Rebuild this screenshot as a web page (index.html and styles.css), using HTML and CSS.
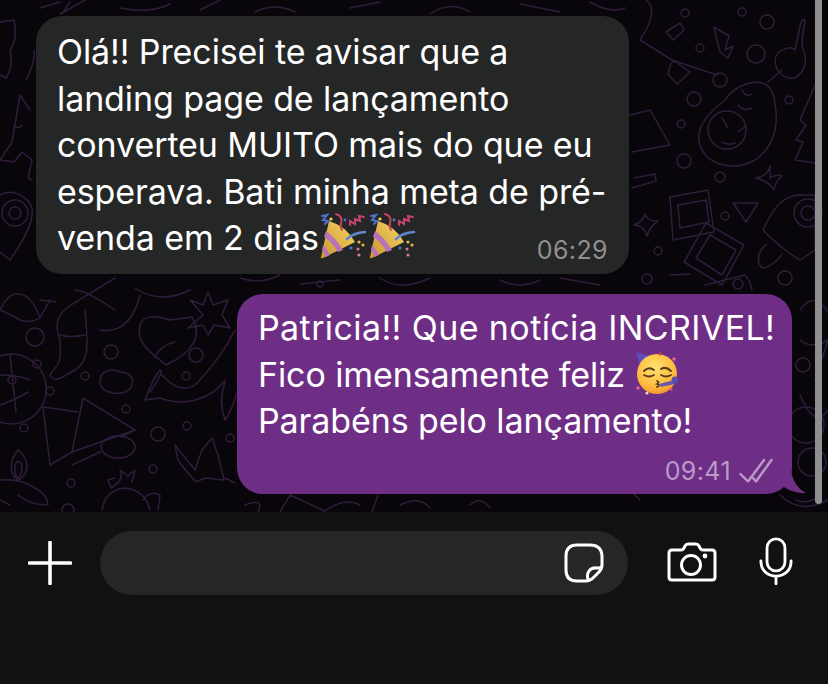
FILE: index.html
```html
<!DOCTYPE html>
<html lang="pt-BR">

<head>
  <meta charset="UTF-8">
  <meta name="viewport" content="width=device-width, initial-scale=1.0">
  <title>Conversa</title>
  <link rel="stylesheet" href="styles.css">
</head>

<body>
  <!-- emoji drawings, used in the text below -->
  <svg class="defs" width="0" height="0">
    <defs>
      <linearGradient id="cone" x1="0" y1="1" x2="1" y2="0">
        <stop offset="0" stop-color="#c9952f" />
        <stop offset="1" stop-color="#f8d766" />
      </linearGradient>
      <radialGradient id="face" cx="0.45" cy="0.35" r="0.7">
        <stop offset="0" stop-color="#ffe36e" />
        <stop offset="0.7" stop-color="#fdb93c" />
        <stop offset="1" stop-color="#ef8f2a" />
      </radialGradient>
      <symbol id="popper" viewBox="0 0 48 48">
        <path d="M2 45 Q1 47 4 46 L36 30 Q27 14 10 9Z" fill="url(#cone)" />
        <path d="M7 19 Q16 25 24 38 L19 40 Q13 30 5 25Z" fill="#b872b8" />
        <path d="M4 33 Q8 37 11 43 L7 45 Q5 40 3 38Z" fill="#b872b8" />
        <path d="M28 27 Q34 21 46 20" fill="none" stroke="#5f86cf" stroke-width="2.6" stroke-linecap="round" />
        <path d="M17 2 Q24 4 22 11 Q21 15 23 18" fill="none" stroke="#c9425c" stroke-width="2" stroke-linecap="round" />
        <path d="M3 4 L8 3 L4 8 L9 9 L6 12" fill="none" stroke="#4f73d0" stroke-width="2" stroke-linecap="round" />
        <path d="M31 13 L31 9 L36 12 L36 7 L41 9 L40 4 L45 5" fill="none" stroke="#c9436e" stroke-width="2" stroke-linecap="round" />
        <circle cx="40" cy="30" r="1.6" fill="#e9b44c" />
        <circle cx="44" cy="33" r="1.6" fill="#e9b44c" />
        <circle cx="39" cy="37" r="1.5" fill="#d87a9a" />
        <circle cx="40" cy="43" r="1.6" fill="#d87a9a" />
        <circle cx="32" cy="36" r="1.5" fill="#4f73d0" />
        <circle cx="12" cy="7" r="1.6" fill="#f0cf5c" />
        <circle cx="26" cy="8" r="1.4" fill="#4f73d0" />
      </symbol>
      <symbol id="party-face" viewBox="0 0 46 46">
        <path d="M2 2 L15 6 L6 15Z" fill="#5a4fc0" />
        <circle cx="23" cy="24" r="20" fill="url(#face)" />
        <path d="M10 21 Q15 16 20 20 M27 19 Q32 16 37 21" fill="none" stroke="#5b3a1e" stroke-width="2" stroke-linecap="round" />
        <path d="M10 25 Q15 28 20 25 M27 25 Q32 28 37 25" fill="none" stroke="#5b3a1e" stroke-width="1.8" stroke-linecap="round" />
        <path d="M23 31 Q26 32 23 34 Q27 35 23 37" fill="none" stroke="#5b3a1e" stroke-width="1.8" stroke-linecap="round" />
        <path d="M25 34 L40 30 L41 34 L27 37Z" fill="#6a57a8" />
        <circle cx="41" cy="30" r="3.4" fill="#5a4fa8" />
        <circle cx="26" cy="4" r="1.6" fill="#d8434f" />
        <circle cx="40" cy="9" r="1.8" fill="#d86a8a" />
        <circle cx="4" cy="38" r="1.7" fill="#d86a9a" />
        <circle cx="13" cy="43" r="1.6" fill="#f2d9a0" />
        <circle cx="37" cy="39" r="1.6" fill="#e05a6a" />
      </symbol>
    </defs>
  </svg>

  <div class="screen">
    <div class="chat">
      <!-- wallpaper -->
      <svg class="doodles" viewBox="0 0 828 512" width="828" height="512">
        <g fill="none" stroke="#2f1d3b" stroke-width="1.5" stroke-linecap="round" stroke-linejoin="round">
          <!-- top right -->
          <path d="M717 75 L672 60 L640 40 Q660 10 646 0 M630 115 L650 110 L670 145 L632 152" />
          <path d="M634 178 L655 174 L656 181 L632 188" />
          <path d="M666 32 L680 23 L684 30 L673 40Z" />
          <path d="M714 27 L729 36 L725 50 L733 46 L728 58 L720 52Z" />
          <path d="M670 66 Q672 60 676 62 L690 72 L677 84 L668 74Z" />
          <circle cx="700" cy="48" r="4" />
          <circle cx="685" cy="13" r="4" />
          <circle cx="742" cy="12" r="4" />
          <circle cx="767" cy="22" r="7" />
          <circle cx="756" cy="54" r="9" />
          <circle cx="720" cy="80" r="7" />
          <circle cx="694" cy="99" r="7" />
          <circle cx="681" cy="124" r="4" />
          <circle cx="789" cy="100" r="4" />
          <circle cx="684" cy="161" r="7" />
          <circle cx="720" cy="177" r="5" />
          <circle cx="725" cy="216" r="4" />
          <circle cx="658" cy="251" r="4" />
          <circle cx="647" cy="279" r="5" />
          <circle cx="785" cy="278" r="7" />
          <path d="M767 85 C755 78 735 85 725 100 C705 115 695 130 700 145 C706 165 735 172 755 160 C770 150 780 130 775 105 C775 95 772 90 767 85Z" />
          <circle cx="727" cy="130" r="19" />
          <path d="M722 118 L728 128 M738 132 L746 126 M742 90 Q746 98 752 94 M738 105 Q744 112 752 108 M722 142 Q728 146 735 143" />
          <path d="M768 82 L782 70" />
          <path d="M775 60 C776 50 790 45 795 50 L800 26 Q802 18 805 20 C805 26 800 40 803 50 C808 60 805 72 795 78 C785 80 775 72 775 60Z" />
          <path d="M770 178 Q776 174 782 176 Q776 180 774 190 Q770 182 756 178 Q768 176 770 166Z" />
          <path d="M670 197 L708 190 L714 232 L673 240Z M678 205 L706 200 L709 222 L680 228Z" />
          <path d="M706 223 L744 245 L722 285 L684 262Z M710 235 L736 250 L722 275 L696 258Z" />
          <path d="M733 203 L758 203 L746 222Z" />
          <path d="M645 214 Q648 222 658 221 Q650 226 647 236 Q645 226 634 225 Q643 222 645 214Z" />
          <path d="M800 195 C780 195 770 215 763 230 Q780 248 800 260 L815 250 L815 195Z" />
          <circle cx="808" cy="213" r="14" />
          <circle cx="808" cy="213" r="7" />
          <path d="M766 245 C758 250 756 262 762 268 C770 268 780 258 782 254" />
          <path d="M670 275 L690 274 M705 285 L745 275 Q750 280 752 290" />
          <circle cx="738" cy="284" r="5" />
          <path d="M815 85 L800 120 L806 125 L796 140 L803 142 L795 160 L815 163" />
          <!-- left column, next to the first bubble -->
          <path d="M0 22 L14 20 Q18 40 10 50 Q14 65 6 78 L0 75" />
          <path d="M0 160 L12 142 L20 95 L30 110 M14 125 Q18 130 22 125 M0 160 L14 162 L22 152 L32 160 L28 178 L32 180" />
          <path d="M26 80 Q36 60 34 50" />
          <circle cx="15" cy="213" r="13" />
          <circle cx="15" cy="213" r="6" />
          <path d="M0 195 C12 188 28 196 32 208 C34 222 24 240 10 260 L0 252" />
          <path d="M40 8 L60 2 M62 14 L70 2" />
          <!-- left, below the first bubble -->
          <path d="M0 310 C12 285 30 290 40 318 C34 322 25 322 20 320 C12 315 5 312 0 310 M40 318 L50 300 M40 300 L56 302" />
          <path d="M115 278 C65 310 50 310 60 340 C62 370 55 365 50 375 C55 385 65 375 75 370 C90 360 88 345 85 310" />
          <path d="M60 335 Q70 338 85 335 M115 310 Q85 290 75 290 M100 330 Q130 335 140 295" />
          <path d="M135 288 Q160 305 190 290" />
          <circle cx="35" cy="337" r="9" />
          <circle cx="37" cy="364" r="4" />
          <circle cx="111" cy="352" r="7" />
          <circle cx="85" cy="376" r="4" />
          <circle cx="50" cy="391" r="4" />
          <circle cx="126" cy="409" r="4" />
          <circle cx="186" cy="376" r="4" />
          <circle cx="196" cy="355" r="7" />
          <circle cx="158" cy="434" r="7" />
          <circle cx="187" cy="426" r="4" />
          <circle cx="230" cy="438" r="4" />
          <circle cx="24" cy="428" r="4" />
          <circle cx="71" cy="483" r="4" />
          <circle cx="153" cy="469" r="4" />
          <circle cx="68" cy="510" r="6" />
          <path d="M170 320 L192 317 Q208 345 166 365 C155 355 135 345 140 325 C143 315 155 315 170 320Z" />
          <path d="M155 358 Q160 345 175 342" />
          <path d="M-5 358 A35 35 0 1 1 -5 420 M0 375 Q18 375 30 380 M0 405 Q15 400 28 392 M10 355 L16 412" />
          <circle cx="12" cy="380" r="4" />
          <path d="M43 407 L50 465 L72 452 L135 430 L83 398 L72 452 M43 407 L78 412" />
          <ellipse cx="118" cy="447" rx="17" ry="11" />
          <path d="M100 452 L72 465 M135 430 L121 437" />
          <path d="M120 372 C112 368 100 370 100 382 C100 395 128 398 132 385 C135 378 128 372 120 372Z" />
          <path d="M150 392 Q165 370 160 370 Q152 380 145 400 L160 398 Q180 405 195 400 Q215 395 225 380 M162 375 Q180 395 195 385 Q220 360 235 330" />
          <path d="M225 382 Q218 400 225 420 Q232 410 238 390" />
          <path d="M203 315 L190 300 L203 305 L208 292 L213 305 L228 300 L222 315 L230 328 L214 325 L208 335 L203 325 L188 328Z" />
          <path d="M175 445 L183 455 L195 470 L202 450 L212 438 L218 455 L224 480 L205 478 L196 482 Q185 470 178 460Z" />
          <path d="M225 478 L235 483" />
          <path d="M18 450 C8 462 10 475 18 480 C28 475 32 462 18 450Z M15 465 Q18 458 22 465 Q22 475 18 478 Q14 475 15 465Z" />
          <path d="M0 480 Q20 478 35 488 Q48 495 48 505 Q30 505 18 495 M10 505 L0 500" />
          <path d="M115 478 L108 480 L111 488 Q125 480 120 470 L128 476 L135 470 L132 482" />
          <path d="M102 510 Q105 490 125 488 Q145 490 150 510 M143 500 Q150 490 160 495 L158 510" />
          <path d="M245 505 Q265 497 258 512 M280 512 L290 495 L325 511 Q345 497 360 505 M372 512 L378 495 M400 505 Q420 495 430 508 M470 505 Q480 495 490 508" />
          <!-- strip between the bubbles and right side -->
          <path d="M240 278 Q260 285 280 275 M300 284 L340 280 M380 278 Q400 292 430 278 M500 280 Q520 290 540 280 M560 278 L600 285" />
          <circle cx="320" cy="284" r="3" />
          <path d="M780 495 Q800 515 828 500 M800 310 C810 295 820 300 828 312 M800 340 Q812 350 828 340 L815 380 M800 395 Q815 430 828 410" />
          <circle cx="806" cy="425" r="18" />
          <circle cx="812" cy="462" r="14" />
          <circle cx="803" cy="365" r="7" />
          <path d="M796 500 Q810 505 820 495 M630 490 L640 500" />
          <!-- top strip -->
          <path d="M60 14 L85 0 M120 8 Q150 14 170 4 M200 10 L220 0 M255 12 Q275 2 295 12 M350 8 L380 2 M430 14 Q450 0 470 12 M520 4 L560 12 M590 2 Q610 14 625 8" />
        </g>
      </svg>

      <div class="bubble bubble-in">
        Olá!! Precisei te avisar que a<br>
        landing page de lançamento<br>
        converteu MUITO mais do que eu<br>
        esperava. Bati minha meta de pré-<br>
        venda em 2 dias<svg class="emoji popper" aria-hidden="true"><use href="#popper" /></svg><svg class="emoji popper" aria-hidden="true"><use href="#popper" /></svg>
        <span class="time time-over">06:29</span>
      </div>

      <div class="bubble bubble-out">
        <span class="wide">Patricia!! Que notícia INCRIVEL!</span><br>
        Fico imensamente feliz <svg class="emoji face" aria-hidden="true"><use href="#party-face" /></svg><br>
        Parabéns pelo lançamento!
        <div class="meta">
          <span class="time">09:41</span>
          <svg class="checks" viewBox="0 0 34 26" width="34" height="26">
            <path d="M1.5 16 L9 23.5 L25 2 M14 20 L17 23.5 L32.5 2" fill="none" stroke="#b99ac8" stroke-width="2.4" stroke-linecap="round" stroke-linejoin="round" />
          </svg>
        </div>
        <svg class="tail" viewBox="0 0 22 32" width="22" height="32">
          <path d="M0 0 L7 8 C8 18 14 27 22 31 C13 31 6 29 0 25Z" fill="#6f2e85" />
        </svg>
      </div>

      <div class="scrollbar"></div>
    </div>

    <div class="composer">
      <svg class="icon plus" viewBox="0 0 44 44" width="44" height="44">
        <path d="M22 1.5 V42.5 M1.5 22 H42.5" stroke="#fff" stroke-width="3.6" stroke-linecap="round" />
      </svg>
      <div class="input">
        <svg class="icon" viewBox="0 0 40 40" width="40" height="40">
          <path d="M13 2 H26 Q38 2 38 14 V22 Q38 26 35 29 L29 35 Q26 38 22 38 H13 Q2 38 2 27 V13 Q2 2 13 2Z M38 22 C38 24 36 25 33 25 C26 24 22 30 24 36 C24 37 23 38 22 38" fill="none" stroke="#fff" stroke-width="3" stroke-linejoin="round" />
        </svg>
      </div>
      <svg class="icon camera" viewBox="0 0 50 40" width="50" height="40">
        <path d="M5 8 H14 Q16 8 17 6 L18 4 Q19 2 21 2 H29 Q31 2 32 4 L33 6 Q34 8 36 8 H45 Q48 8 48 11 V35 Q48 38 45 38 H5 Q2 38 2 35 V11 Q2 8 5 8Z" fill="none" stroke="#fff" stroke-width="3" stroke-linejoin="round" />
        <circle cx="24" cy="23" r="9.5" fill="none" stroke="#fff" stroke-width="3" />
        <circle cx="38" cy="14" r="2.4" fill="#fff" />
      </svg>
      <svg class="icon mic" viewBox="0 0 36 50" width="34" height="48">
        <rect x="8.5" y="1.5" width="19" height="34" rx="9.5" fill="none" stroke="#fff" stroke-width="3" />
        <path d="M2 25 C2 35 9 41 18 41 C27 41 34 35 34 25 M18 41 V49" fill="none" stroke="#fff" stroke-width="3" stroke-linecap="round" />
      </svg>
    </div>
  </div>
</body>

</html>
```

FILE: styles.css
```css
/* Base styles */
* {
  box-sizing: border-box;
}

body {
  margin: 0;
  background: #111111;
  font-family: Inter, "Liberation Sans", sans-serif;
  color: #ffffff;
}

.defs {
  display: block;
  position: absolute;
}

.screen {
  width: 828px;
  height: 684px;
  display: flex;
  flex-direction: column;
  overflow: hidden;
}

/* Chat area */
.chat {
  position: relative;
  height: 512px;
  padding: 16px 36px 0;
  background: #08060a;
}

.doodles {
  position: absolute;
  left: 0;
  top: 0;
}

.bubble {
  position: relative;
  font-size: 34px;
  line-height: 46.5px;
  letter-spacing: -0.1px;
  white-space: nowrap;
}

.bubble-in {
  width: 593px;
  height: 258px;
  padding: 13px 21px 0;
  background: #252626;
  border-radius: 26px;
}

.bubble-out {
  width: 555px;
  height: 200px;
  margin: 20px 0 0 auto;
  padding: 11px 21px 0;
  background: #6f2e85;
  border-radius: 26px;
}

.wide {
  letter-spacing: 0.4px;
}

/* negative margins keep the emoji from stretching its line */
.popper {
  width: 48px;
  height: 48px;
  margin: -14px 1px -14px 0;
  vertical-align: 4px;
}

.face {
  width: 46px;
  height: 46px;
  margin: -14px 0;
  vertical-align: 5px;
}

.time {
  font-size: 25px;
  letter-spacing: 0.4px;
  line-height: 30px;
  color: #8f9090;
}

.time-over {
  position: absolute;
  right: 21px;
  bottom: 9px;
}

.meta {
  display: flex;
  justify-content: flex-end;
  align-items: center;
  gap: 8px;
  margin-top: 11px;
  margin-right: -2px;
}

.meta .time {
  color: #b99ac8;
}

.tail {
  position: absolute;
  right: -14px;
  bottom: 0;
}

.scrollbar {
  position: absolute;
  left: 815px;
  top: 0;
  width: 7px;
  height: 504px;
  background: #8f8f8f;
  border-radius: 0 0 4px 4px;
}

/* Bottom bar */
.composer {
  flex: 1;
  display: flex;
  align-items: flex-start;
  padding: 19px 0 0 28px;
  background: #111111;
}

.icon {
  flex: none;
}

.plus {
  margin-top: 10px;
}

.input {
  width: 528px;
  height: 64px;
  margin-left: 28px;
  padding: 12px 24px 0 0;
  display: flex;
  justify-content: flex-end;
  background: #262626;
  border-radius: 32px;
}

.camera {
  margin: 11px 0 0 39px;
}

.mic {
  margin: 6px 0 0 42px;
}
```
